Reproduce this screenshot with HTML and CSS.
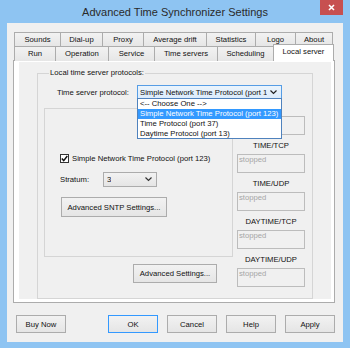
FILE: index.html
```html
<!DOCTYPE html>
<html lang="en">
<head>
    <meta charset="UTF-8">
    <title>Advanced Time Synchronizer Settings</title>
    <link rel="stylesheet" href="styles.css">
</head>
<body>
    <div class="window">
        <div class="titlebar">
            <span></span>
            <div class="title">Advanced Time Synchronizer Settings</div>
            <div class="close">
                <svg width="7" height="7" viewBox="0 0 7 7"><path d="M1 1L6 6M6 1L1 6" stroke="#fff" stroke-width="1.6"/></svg>
            </div>
        </div>

        <div class="client">
            <div class="tabs row-back">
                <div class="tab">Sounds</div>
                <div class="tab">Dial-up</div>
                <div class="tab">Proxy</div>
                <div class="tab">Average drift</div>
                <div class="tab">Statistics</div>
                <div class="tab">Logo</div>
                <div class="tab last">About</div>
            </div>
            <div class="tabs row-front">
                <div class="tab">Run</div>
                <div class="tab">Operation</div>
                <div class="tab">Service</div>
                <div class="tab">Time servers</div>
                <div class="tab">Scheduling</div>
                <div class="tab active last">Local server</div>
            </div>

            <div class="panel">
                <div class="page">
                    <fieldset class="group">
                        <legend>Local time server protocols:</legend>

                        <div class="protocol-row">
                            <label class="protocol-label">Time server protocol:</label>
                            <div class="combo-wrap">
                                <div class="combo open">
                                    <span class="combo-text">Simple Network Time Protocol (port 123)</span>
                                    <svg class="chevron" width="7" height="5" viewBox="0 0 7 5"><path d="M0.5 0.5L3.5 3.5L6.5 0.5" fill="none" stroke="#222" stroke-width="1.2"/></svg>
                                </div>
                                <ul class="combo-list">
                                    <li>&lt;-- Choose One --&gt;</li>
                                    <li class="selected">Simple Network Time Protocol (port 123)</li>
                                    <li>Time Protocol (port 37)</li>
                                    <li>Daytime Protocol (port 13)</li>
                                </ul>
                            </div>
                        </div>

                        <div class="columns">
                            <div class="left-col">
                                <div class="sntp-box">
                                    <div class="check-row">
                                        <span class="checkbox">
                                            <svg width="7" height="7" viewBox="0 0 7 7"><path d="M0.8 3.6L2.7 5.6L6.3 1" fill="none" stroke="#111" stroke-width="1.5"/></svg>
                                        </span>
                                        <span>Simple Network Time Protocol (port 123)</span>
                                    </div>
                                    <div class="stratum-row">
                                        <span class="stratum-label">Stratum:</span>
                                        <div class="combo small">
                                            <span class="combo-text">3</span>
                                            <svg class="chevron" width="7" height="5" viewBox="0 0 7 5"><path d="M0.5 0.5L3.5 3.5L6.5 0.5" fill="none" stroke="#333" stroke-width="1.2"/></svg>
                                        </div>
                                    </div>
                                    <button class="btn btn-sntp">Advanced SNTP Settings...</button>
                                </div>
                                <button class="btn btn-advanced">Advanced Settings...</button>
                            </div>

                            <div class="right-col">
                                <div class="status">
                                    <div class="status-label">SNTP</div>
                                    <div class="status-box">stopped</div>
                                </div>
                                <div class="status">
                                    <div class="status-label">TIME/TCP</div>
                                    <div class="status-box">stopped</div>
                                </div>
                                <div class="status">
                                    <div class="status-label">TIME/UDP</div>
                                    <div class="status-box">stopped</div>
                                </div>
                                <div class="status">
                                    <div class="status-label">DAYTIME/TCP</div>
                                    <div class="status-box">stopped</div>
                                </div>
                                <div class="status">
                                    <div class="status-label">DAYTIME/UDP</div>
                                    <div class="status-box">stopped</div>
                                </div>
                            </div>
                        </div>
                    </fieldset>
                </div>
            </div>

            <div class="dialog-buttons">
                <button class="btn btn-buy">Buy Now</button>
                <button class="btn btn-default">OK</button>
                <button class="btn">Cancel</button>
                <button class="btn">Help</button>
                <button class="btn">Apply</button>
            </div>
        </div>
    </div>
</body>
</html>
```

FILE: styles.css
```css
* {
    margin: 0;
    padding: 0;
    box-sizing: border-box;
}

body {
    width: 350px;
    height: 348px;
    overflow: hidden;
    font-family: 'Liberation Sans', Arial, sans-serif;
    font-size: 7.7px;
    color: #111;
}

.window {
    width: 350px;
    height: 348px;
    background-color: #8ec4f2;
    padding: 0 7px 6px 7px;
}

/* title bar */
.titlebar {
    height: 23px;
    display: grid;
    grid-template-columns: 1fr auto 1fr;
}

.title {
    font-size: 11px;
    line-height: 24px;
    color: #2a2a2a;
    white-space: nowrap;
}

.close {
    justify-self: end;
    width: 23px;
    height: 15px;
    background-color: #c75050;
    display: flex;
    justify-content: center;
    align-items: center;
}

/* client area */
.client {
    height: 319px;
    background-color: #f0f0f0;
    padding: 9px 8px 0 6px;
}

.tabs {
    display: grid;
    height: 14px;
    margin-left: 1px;
}

.row-back {
    grid-template-columns: 46px 42px 41px 63px 49px 40px 38px;
}

.row-front {
    grid-template-columns: 41px 53px 46px 63px 56px 61px;
}

.tab {
    border: 1px solid #acacac;
    border-right: none;
    border-bottom: none;
    background: linear-gradient(#f2f2f2, #e6e6e6);
    text-align: center;
    line-height: 13px;
    white-space: nowrap;
}

.tab.last {
    border-right: 1px solid #acacac;
}

.tab.active {
    position: relative;
    z-index: 1;
    margin-top: -2px;
    height: 17px;
    background: #fff;
    line-height: 13px;
}

.panel {
    width: 322px;
    height: 243px;
    background-color: #fff;
    border: 1px solid #acacac;
    padding: 1px 3px 3px 5px;
}

.page {
    height: 100%;
    background-color: #f0f0f0;
    padding: 6px 18px 0 18px;
}

/* group box */
.group {
    border: 1px solid #d5d5d5;
    padding: 0 7px 5px 6px;
}

.group legend {
    margin-left: 5px;
    padding: 0 1px;
    line-height: 10px;
}

.protocol-row {
    display: flex;
    align-items: center;
    margin-top: 7px;
    padding-left: 13px;
    height: 14px;
}

.protocol-label {
    width: 80px;
}

.combo-wrap {
    position: relative;
}

.combo {
    display: flex;
    align-items: center;
    justify-content: space-between;
    border: 1px solid #acacac;
    background: linear-gradient(#f2f2f2, #e5e5e5);
    padding: 0 4px 0 3px;
    white-space: nowrap;
}

.combo.open {
    width: 145px;
    height: 14px;
    border-color: #569de5;
    background: linear-gradient(#ebf4fc, #dcecfc);
    padding-left: 2px;
}

.combo-text {
    overflow: hidden;
}

.combo.open .combo-text {
    width: 127px;
}

.chevron {
    flex-shrink: 0;
}

.combo-list {
    position: absolute;
    left: 0;
    top: 13px;
    width: 145px;
    height: 41px;
    background-color: #fff;
    border: 1px solid #4f82bd;
    list-style: none;
    z-index: 2;
}

.combo-list li {
    height: 10px;
    line-height: 10px;
    padding-left: 2px;
    white-space: nowrap;
}

.combo-list li.selected {
    background-color: #3399ff;
    color: #fff;
}

.columns {
    display: grid;
    grid-template-columns: 189px 1fr;
    column-gap: 4px;
    margin-top: 4px;
}

.sntp-box {
    margin-top: 5px;
    height: 149px;
    border: 1px solid #d5d5d5;
    padding: 44px 0 0 15px;
}

.check-row {
    display: flex;
    align-items: center;
    height: 10px;
}

.checkbox {
    width: 9px;
    height: 9px;
    border: 1px solid #333;
    background-color: #fff;
    display: flex;
    justify-content: center;
    align-items: center;
    margin-right: 3px;
}

.stratum-row {
    display: flex;
    align-items: center;
    margin-top: 9px;
}

.stratum-label {
    width: 43px;
}

.combo.small {
    width: 54px;
    height: 15px;
}

.btn {
    font-family: 'Liberation Sans', Arial, sans-serif;
    font-size: 7.7px;
    color: #111;
    background: linear-gradient(#f2f2f2, #e5e5e5);
    border: 1px solid #acacac;
    border-radius: 0;
    white-space: nowrap;
}

.btn-sntp {
    display: block;
    margin-top: 10px;
    margin-left: 1px;
    width: 106px;
    height: 20px;
}

.btn-advanced {
    display: block;
    margin-top: 7px;
    margin-left: 89px;
    width: 84px;
    height: 19px;
}

/* status boxes */
.status {
    margin-bottom: 6px;
}

.status-label {
    text-align: center;
    line-height: 10px;
}

.status-box {
    margin-top: 3px;
    height: 19px;
    border: 1px solid #bcbcbc;
    color: #a6a6a6;
    padding: 0 1px;
    line-height: 9px;
}

/* bottom buttons */
.dialog-buttons {
    display: flex;
    gap: 9px;
    margin-top: 12px;
    padding-left: 3px;
}

.dialog-buttons .btn {
    width: 50px;
    height: 18px;
}

.dialog-buttons .btn-buy {
    margin-right: 33px;
}

.dialog-buttons .btn-default {
    border-color: #3399ff;
}
```
